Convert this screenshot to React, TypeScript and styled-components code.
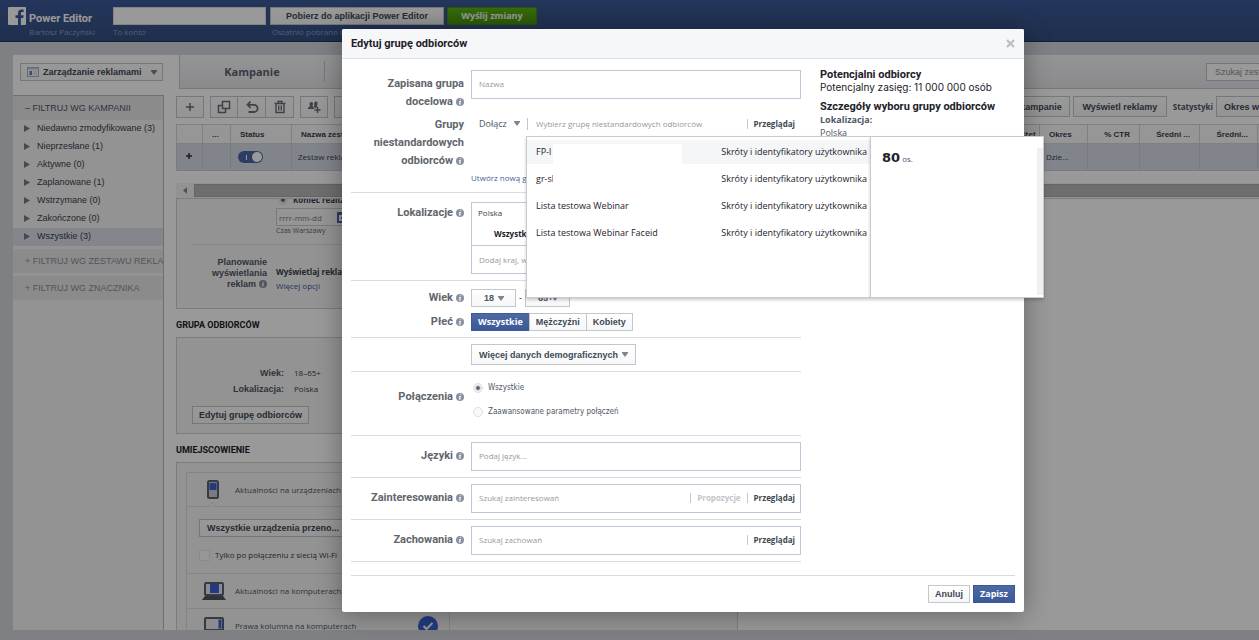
import React from "react";
import styled, { createGlobalStyle, css } from "styled-components";

const arial = `"Liberation Sans", Arial, sans-serif`;
const roboto = `Roboto, "Liberation Sans", sans-serif`;
const open = `"Open Sans", "Liberation Sans", sans-serif`;
const narrow = `"DejaVu Sans Condensed", "Open Sans", sans-serif`;

const Global = createGlobalStyle`
  *, *::before, *::after { box-sizing: border-box; }
  body { margin: 0; background: #d3d5dd; font: 9px/18px ${arial}; color: #373e4d; }
  button, input, select { font: inherit; color: inherit; margin: 0; }
  button { cursor: pointer; }
  input::placeholder { color: #999; opacity: 1; }
`;

/* ---------- shared parts ---------- */

const Button = styled.button<{ $h?: number; $align?: string; $w?: number }>`
  display: inline-flex;
  align-items: center;
  justify-content: ${(p) => p.$align || "center"};
  gap: 4px;
  flex: none;
  height: ${(p) => p.$h || 18}px;
  ${(p) => p.$w && `width: ${p.$w}px;`}
  padding: 0 7px;
  border: 1px solid #c4c6ca;
  background: linear-gradient(#fff, #f6f7f8);
  font: 700 9px/16px ${arial};
  color: #414956;
  white-space: nowrap;
`;

const PrimaryButton = styled(Button)`
  border-color: #3b5998;
  background: linear-gradient(#4e69a2, #3b5998);
  font-family: ${open};
  color: #fff;
`;

const GreenButton = styled(Button)`
  width: 90px;
  border-color: #478f10;
  background: linear-gradient(#5bb312, #4a9a0c);
  font-family: ${open};
  color: #fff;
`;

const CaretSvg = styled.svg`
  width: 6px;
  height: 5px;
  flex: none;
  fill: #7f8490;
`;
const Caret = () => (
  <CaretSvg viewBox="0 0 6 5" aria-hidden="true">
    <path d="M0 0h6v1L3 5 0 1z" />
  </CaretSvg>
);

const InfoSvg = styled.svg`
  width: 8px;
  height: 8px;
  flex: none;
  margin-left: 3px;
  vertical-align: -1px;
`;
const Info = () => (
  <InfoSvg viewBox="0 0 8 8" aria-hidden="true">
    <circle cx="4" cy="4" r="4" fill="#8a90a0" />
    <path d="M4.3 1.2h1l-.2 1h-1zM3.2 3h1.7l-.6 2.7h.6l-.2.9H2.9l.6-2.7h-.5z" fill="#fff" />
  </InfoSvg>
);

const Radio = styled.input.attrs({ type: "radio" })`
  appearance: none;
  flex: none;
  width: 10px;
  height: 10px;
  border: 1px solid #e0e1e4;
  border-radius: 50%;
  background: #f9f9fa;
  &:checked {
    background: radial-gradient(circle, #565d6b 0 1px, #f2f2f4 3px);
  }
`;

const Checkbox = styled.input.attrs({ type: "checkbox" })`
  appearance: none;
  width: 11px;
  height: 11px;
  border: 1px solid #e6e6e6;
  background: #fbfbfb;
`;

/* ---------- page frame ---------- */

const Viewport = styled.div`
  position: relative;
  height: 100vh;
  overflow: hidden;
`;
const Shell = styled.div`
  position: relative;
  display: flex;
  flex-direction: column;
  min-width: 1366px;
  height: 100%;
  padding-bottom: 10px;
`;
const Overlay = styled.div`
  position: absolute;
  inset: 0;
  padding-top: 29px;
  background: rgba(0, 0, 0, 0.4);
`;

const TopBar = styled.header`
  display: flex;
  flex: none;
  height: 42px;
  padding: 7px 8px 0;
  border-bottom: 1px solid #1c3468;
  background: linear-gradient(#3c5a9a, #34507f);
`;
const Brand = styled.div`
  width: 87px;
  padding: 5px 0 0 3px;
  h1 {
    margin: 0;
    font: 700 11px/14px ${roboto};
    color: #fff;
  }
`;
const Sub = styled.div`
  font: 8px/11px ${open};
  color: #8a9bc8;
  white-space: nowrap;
`;
const Account = styled.div`
  width: 157px;
  ${Sub} { padding-top: 1px; }
`;
const AccountInput = styled.input`
  display: block;
  width: 153px;
  height: 18px;
  border: 1px solid #ddd;
  background: #fff;
`;
const Download = styled.div`
  width: 177px;
  button { display: flex; }
  ${Sub} { padding: 1px 0 0 2px; }
`;

const Content = styled.div`
  display: flex;
  flex: 1;
  min-height: 0;
  margin: 13px 13px 0;
  background: #fff;
  overflow: hidden;
`;

/* ---------- sidebar ---------- */

const Sidebar = styled.nav`
  display: flex;
  flex-direction: column;
  flex: none;
  width: 151px;
`;
const Manage = styled(Button)`
  width: 143px;
  margin: 8px 0 14px 7px;
  padding: 0 5px 0 6px;
  span { flex: 1; text-align: left; }
`;
const Filters = styled.div`
  flex: 1;
  border-top: 1px solid #b9b9b9;
  border-right: 1px solid #b9b9b9;
  background: #f5f5f5;
`;
const FilterHead = styled.button<{ $open?: boolean }>`
  display: block;
  width: 100%;
  height: 24px;
  margin-bottom: ${(p) => (p.$open ? 0 : 3)}px;
  padding: 0 0 0 12px;
  border: 0;
  background: #e8e8ea;
  font: 9px/22px ${arial};
  text-align: left;
  white-space: nowrap;
  overflow: hidden;
  color: ${(p) => (p.$open ? "#4e5665" : "#898f9c")};
`;
const FilterList = styled.ul`
  margin: 0 0 3px;
  padding: 0;
  list-style: none;
`;
const FilterItem = styled.li<{ $on?: boolean }>`
  height: 18px;
  background: ${(p) => (p.$on ? "#dcdfea" : "transparent")};
  a {
    display: flex;
    align-items: center;
    gap: 7px;
    padding-left: 11px;
    font: 9px/17px ${arial};
    color: #373e4d;
    text-decoration: none;
    white-space: nowrap;
  }
  svg { width: 6px; height: 7px; fill: #777b84; }
`;

/* ---------- main column ---------- */

const Main = styled.main`
  display: flex;
  flex-direction: column;
  flex: 1;
  min-width: 0;
  padding-left: 12px;
`;
const Tabs = styled.div`
  display: flex;
  align-items: center;
  flex: none;
  height: 34px;
  margin-left: 3px;
  border-left: 1px solid #c6c8cd;
  border-bottom: 1px solid #c6c8cd;
  background: linear-gradient(#f6f7f8, #e6e7ea);
`;
const Tab = styled.button`
  width: 145px;
  height: 21px;
  border: 0;
  border-right: 1px solid #c6c8d2;
  background: none;
  font: 700 11px/20px ${open};
  color: #5b6270;
`;
const Search = styled.input`
  width: 147px;
  height: 18px;
  margin-left: auto;
  padding: 0 8px;
  border: 1px solid #bdc7d8;
  background: #fff;
  font: 9px ${arial};
  &::placeholder { color: #8a8f9a; }
`;
const Tools = styled.div`
  display: flex;
  align-items: center;
  flex: none;
  gap: 6px;
  height: 35px;
`;
const ToolGroup = styled.div`
  display: flex;
  button + button { margin-left: -1px; width: 29px; }
`;
const Tool = styled(Button)`
  width: 28px;
  height: 22px;
  padding: 0;
  svg { width: 14px; height: 14px; fill: none; stroke: #696e7a; }
`;
const ToolsRight = styled.div`
  display: flex;
  align-items: center;
  gap: 3px;
  margin-left: auto;
  strong { font: 700 8px/18px ${open}; color: #4e5665; padding-left: 3px; }
`;

const Table = styled.table`
  flex: none;
  width: 100%;
  table-layout: fixed;
  border-collapse: collapse;
  th, td {
    padding: 0 9px;
    border: 1px solid #d5d6da;
    overflow: hidden;
    white-space: nowrap;
    text-align: left;
  }
  th {
    height: 19px;
    font: 700 8px/17px ${arial};
    background: #fbfbfb;
  }
  td {
    height: 27px;
    padding: 0 6px;
    font: 8px/26px ${open};
    background: #d8dce8;
    border-color: #cacedb;
  }
`;
const Th = styled.th<{ $a?: string; $w?: number }>`
  && { text-align: ${(p) => p.$a || "left"}; }
  ${(p) => p.$w && `width: ${p.$w}px;`}
`;
const Switch = styled.label`
  display: flex;
  align-items: center;
  justify-content: space-between;
  width: 25px;
  height: 12px;
  padding: 0 1px 0 8px;
  border-radius: 6px;
  background: #4a66a5;
  margin-left: 1px;
  &::before { content: ""; width: 1px; height: 5px; background: #fff; }
  input {
    appearance: none;
    width: 10px;
    height: 10px;
    border-radius: 50%;
    background: #fff;
  }
`;
const ScrollRow = styled.div`
  display: flex;
  align-items: center;
  flex: none;
  height: 16px;
  margin-top: 12px;
  border-bottom: 1px solid #d0d0d4;
  background: #f4f4f4;
  svg { width: 4px; height: 7px; margin: 0 7px; fill: #888; }
`;
const Thumb = styled.div`
  flex: 1;
  height: 13px;
  background: #b7b7b7;
  border: 1px solid #a8a8a8;
`;

const Detail = styled.div`
  width: 562px;
`;
const Panel = styled.section<{ $h: number; $joined?: boolean }>`
  height: ${(p) => p.$h}px;
  border: 1px solid #cfcfcf;
  ${(p) => p.$joined && "border-top: 0;"}
  background: #f5f5f5;
  overflow: hidden;
`;
const PanelTitle = styled.h2`
  margin: 0;
  font: 700 9px/28px ${roboto};
  height: 28px;
  padding-top: 2px;
  color: #1d2129;
`;
const EndDate = styled.div`
  margin: -7px 0 7px 15px;
  padding-left: 84px;
  height: 53px;
  border-bottom: 1px solid #dedee0;
  label { display: flex; align-items: center; gap: 5px; padding-left: 2px; height: 16px; font: 700 8px/16px ${open}; }
`;
const DateBox = styled.span`
  display: flex;
  align-items: center;
  width: 90px;
  height: 18px;
  border: 1px solid #c9cbd1;
  background: #f9f9f9;
  input { width: 60px; height: 16px; padding: 0 2px; border: 0; background: none; font: 8px ${open}; }
  input::placeholder { color: #777; }
  svg { width: 12px; height: 11px; }
`;
const Note = styled.small`
  display: block;
  font: 7px/10px ${open};
  color: #666;
`;
const Schedule = styled.div`
  display: grid;
  grid-template-columns: 90px 1fr;
  column-gap: 9px;
  padding-top: 5px;
  > strong { padding-left: 20px; font: 700 9px/11px ${arial}; text-align: right; color: #4e5665; }
  div { padding-top: 8px; font: 700 8px/14px ${open}; }
  a { display: block; font-weight: 400; color: #3b5998; text-decoration: none; }
`;
const Facts = styled.dl`
  display: grid;
  grid-template-columns: 107px 1fr;
  column-gap: 10px;
  margin: 0;
  padding-top: 27px;
  dt { font: 700 9px/16px ${arial}; text-align: right; color: #4e5665; }
  dd { margin: 0; font: 8px/16px ${open}; }
`;
const EditAudience = styled(Button)`
  margin: 9px 0 0 15px;
  padding: 0 6px;
`;
const Placements = styled.ul`
  width: 264px;
  margin: 9px;
  padding: 0;
  border: 1px solid #dcdcde;
  border-radius: 2px;
  list-style: none;
`;
const Placement = styled.li<{ $h: number; $open?: boolean }>`
  position: relative;
  display: flex;
  align-items: center;
  height: ${(p) => p.$h}px;
  padding-right: 11px;
  border-bottom: 1px solid #dcdcde;
  font: 8px/16px ${open};
  color: #4e5665;
  > svg { flex: none; width: 24px; height: 20px; margin: 0 9px 0 15px; }
  > svg + svg { width: 20px; margin: 0 0 0 auto; }
  ${(p) =>
    p.$open &&
    css`
      &::after {
        content: "";
        position: absolute;
        left: 22px;
        bottom: -4px;
        width: 7px;
        height: 7px;
        border: solid #dcdcde;
        border-width: 1px 0 0 1px;
        background: #f5f5f5;
        transform: rotate(45deg);
        clip-path: polygon(0 0, 100% 0, 0 100%);
      }
    `}
`;
const PlacementOptions = styled.li`
  height: 67px;
  padding: 12px 12px 0;
  border-bottom: 1px solid #dcdcde;
  label { display: flex; align-items: center; gap: 5px; margin-top: 9px; font: 8px/18px ${open}; }
`;

/* ---------- dialog ---------- */

const Dialog = styled.section`
  position: relative;
  width: 682px;
  margin: 0 auto;
  background: #fff;
  border-radius: 2px;
  box-shadow: 0 2px 26px rgba(0, 0, 0, 0.35);
`;
const DialogHead = styled.header`
  display: flex;
  align-items: center;
  justify-content: space-between;
  height: 30px;
  padding: 0 9px;
  border-bottom: 1px solid #e2e3e6;
  border-radius: 2px 2px 0 0;
  background: #f6f7f9;
  h2 { margin: 0; padding-top: 1px; font: 700 11px/20px ${roboto}; color: #1d2129; }
  button { width: 9px; height: 20px; padding: 0; border: 0; background: none; }
  svg { display: block; width: 9px; height: 9px; stroke: #b8bbc2; stroke-width: 2; }
`;
const DialogBody = styled.div`
  display: flex;
  gap: 19px;
  padding: 0 9px;
`;
const Form = styled.form`
  flex: none;
  width: 450px;
`;
const Section = styled.div<{ $top: number; $bottom: number }>`
  display: flex;
  flex-direction: column;
  gap: 6px;
  padding: ${(p) => p.$top}px 0 ${(p) => p.$bottom}px;
  border-bottom: 1px solid #d9dadc;
`;
const Row = styled.div<{ $h?: number }>`
  display: grid;
  grid-template-columns: 113px 330px;
  column-gap: 7px;
  align-items: start;
  ${(p) => p.$h && `height: ${p.$h}px;`}
`;
const Label = styled.label<{ $pad?: number }>`
  padding-top: ${(p) => p.$pad || 0}px;
  text-align: right;
  font: 700 11px/18px ${roboto};
  color: #62656c;
`;
const fieldBox = css`
  border: 1px solid #bdc7d8;
  background: #fff;
`;
const Field = styled.div`
  ${fieldBox}
  display: flex;
  align-items: center;
  height: 29px;
  padding: 0 5px 2px 7px;
`;
const Bare = styled.input`
  flex: 1;
  min-width: 0;
  height: 18px;
  padding: 0;
  border: 0;
  outline: 0;
  background: none;
  font: 8px ${open};
`;
const FieldLink = styled.button<{ $off?: boolean }>`
  height: 10px;
  margin-left: 6px;
  padding: 0 0 0 6px;
  border: 0;
  border-left: 1px solid #bdc7d8;
  background: none;
  font: 700 8px/9px ${open};
  color: ${(p) => (p.$off ? "#c3c5ca" : "#3f4651")};
`;
const Audiences = styled.div`
  position: relative;
`;
const AudienceLine = styled.div`
  display: flex;
  align-items: center;
  height: 27px;
  padding: 0 6px 0 8px;
`;
const PlainSelect = styled.span`
  display: flex;
  align-items: center;
  width: 49px;
  height: 12px;
  margin-right: 8px;
  border-right: 1px solid #bdc7d8;
  select { appearance: none; width: 35px; height: 14px; padding: 0; border: 0; background: none; font: 9px/14px ${open}; color: #4e5665; }
`;
const CreateLink = styled.a`
  display: block;
  width: 55px;
  margin-top: 32px;
  overflow: hidden;
  white-space: nowrap;
  font: 8px/18px ${open};
  color: #4a6394;
  text-decoration: none;
`;
const Popup = styled.div`
  position: absolute;
  z-index: 2;
  left: 55px;
  top: 26px;
  display: flex;
  width: 518px;
  height: 162px;
`;
const Options = styled.div`
  position: relative;
  flex: none;
  width: 344px;
  padding: 3px 0;
  border: 1px solid #c9cacd;
  border-right: 0;
  background: #fff;
  box-shadow: 0 2px 3px rgba(0, 0, 0, 0.2);
`;
const Option = styled.button<{ $on?: boolean }>`
  display: flex;
  align-items: center;
  justify-content: space-between;
  width: 100%;
  height: 24px;
  margin-bottom: 3px;
  padding: 0 3px 0 9px;
  border: 0;
  background: ${(p) => (p.$on ? "#f5f6f8" : "#fff")};
  font: 9px/24px ${open};
  color: #1d2129;
`;
const Blank = styled.div`
  position: absolute;
  left: 26px;
  top: 7px;
  width: 129px;
  height: 44px;
  background: #fff;
`;
const HoverCard = styled.div`
  position: relative;
  flex: 1;
  padding: 12px 11px;
  border: 1px solid #c9cacd;
  background: #fff;
  box-shadow: 0 2px 3px rgba(0, 0, 0, 0.2);
  font: 8px/18px ${open};
  color: #4e5665;
  strong { font: 700 13px/18px "DejaVu Sans", sans-serif; color: #1d2129; }
  &::after {
    content: "";
    position: absolute;
    right: 0;
    top: 11px;
    bottom: 2px;
    width: 6px;
    background: #f0f0f0;
  }
`;
const Places = styled.div`
  ${fieldBox}
  height: 72px;
  font: 8px/20px ${open};
  p { margin: 0; padding-left: 6px; }
  strong { display: block; padding-left: 22px; line-height: 22px; color: #1d2129; }
  div { display: flex; align-items: center; height: 28px; padding: 0 7px; border-top: 1px solid #bdc7d8; }
`;
const Ages = styled.div`
  display: flex;
  gap: 3px;
  line-height: 18px;
`;
const AgeSelect = styled.span`
  position: relative;
  select {
    appearance: none;
    display: block;
    width: 45px;
    height: 18px;
    padding: 0 0 0 12px;
    border: 1px solid #c4c6ca;
    border-radius: 0;
    background: linear-gradient(#fff, #f6f7f8);
    font: 700 9px ${arial};
    color: #4e5665;
  }
  svg { position: absolute; right: 12px; top: 7px; }
`;
const Segments = styled.div`
  display: flex;
  button + button { margin-left: -1px; }
  button { padding: 0 6px; }
`;
const Choices = styled.div`
  display: flex;
  flex-direction: column;
  gap: 6px;
  label { display: flex; align-items: center; gap: 5px; padding-left: 2px; font: 8px/18px ${narrow}; color: #4e5665; }
`;
const Aside = styled.aside`
  padding-top: 9px;
  font: 10px/13px Inter, ${roboto};
  color: #1d2129;
  h3 { margin: 0; font: 700 11px/13px ${roboto}; }
  p { margin: 0 0 6px; }
  dl { margin: 0; font: 9px/13px ${open}; color: #4e5665; }
  dt { font-weight: 700; }
  dd { margin: 0; }
`;
const DialogFoot = styled.footer`
  display: flex;
  justify-content: flex-end;
  gap: 3px;
  margin: 13px 9px 0;
  padding: 9px 0;
  border-top: 1px solid #d9dadc;
  button { padding: 0 6px; }
`;

/* ---------- data ---------- */

const filters = [
  "Niedawno zmodyfikowane (3)",
  "Nieprzesłane (1)",
  "Aktywne (0)",
  "Zaplanowane (1)",
  "Wstrzymane (0)",
  "Zakończone (0)",
  "Wszystkie (3)",
];
const audiences = ["FP-l", "gr-sl", "Lista testowa Webinar", "Lista testowa Webinar Faceid"];

const Laptop = ({ side }: { side?: boolean }) => (
  <svg viewBox="0 0 24 20" aria-hidden="true">
    <rect x="3" y="2" width="18" height="12" rx="1" fill="#e8e9ee" stroke="#5d6270" strokeWidth="2" />
    {side ? <rect x="16.500" y="3.500" width="3" height="9" fill="#3b62d6" /> : <rect x="8" y="3" width="9" height="9" fill="#3b62d6" />}
    <path d="M3 15h18l3 4H0z" fill="#4d525e" />
  </svg>
);

export default function App() {
  return (
    <Viewport>
      <Global />
      <Shell>
        <TopBar>
          <svg width="18" height="18" viewBox="0 0 18 18" aria-hidden="true">
            <rect width="18" height="18" rx="1" fill="#fff" />
            <path d="M10 18v-7H7.500V8.300H10V6.300C10 3.800 11.400 2.600 13.600 2.600h2v2.500h-1.300c-1.100 0-1.400.5-1.400 1.400v1.800h2.700l-.4 2.700h-2.300v7z" fill="#3b5998" />
          </svg>
          <Brand>
            <h1>Power Editor</h1>
            <Sub>Bartosz Paczyński</Sub>
          </Brand>
          <Account>
            <AccountInput aria-label="Konto" />
            <Sub>To konto</Sub>
          </Account>
          <Download>
            <Button $w={174}>Pobierz do aplikacji Power Editor</Button>
            <Sub>Ostatnio pobrano dzisiaj</Sub>
          </Download>
          <GreenButton>Wyślij zmiany</GreenButton>
        </TopBar>

        <Content>
          <Sidebar>
            <Manage>
              <svg width="12" height="10" viewBox="0 0 12 10" aria-hidden="true">
                <rect x=".5" y=".5" width="11" height="9" fill="#f2f4f8" stroke="#a9b3c9" />
                <path d="M1 1h10v1.500H1z" fill="#c3cbdc" />
                <path d="M2.500 4H5v4H2.500z" fill="#6a7fae" />
                <path d="M7 5h3M7 7h3" stroke="#ccd3e2" />
              </svg>
              <span>Zarządzanie reklamami</span>
              <Caret />
            </Manage>
            <Filters>
              <FilterHead $open>– FILTRUJ WG KAMPANII</FilterHead>
              <FilterList>
                {filters.map((f, i) => (
                  <FilterItem key={f} $on={i === 6}>
                    <a href="#filtr">
                      <svg viewBox="0 0 6 7" aria-hidden="true"><path d="M0 0l6 3.500L0 7z" /></svg>
                      {f}
                    </a>
                  </FilterItem>
                ))}
              </FilterList>
              <FilterHead>+ FILTRUJ WG ZESTAWU REKLAM</FilterHead>
              <FilterHead>+ FILTRUJ WG ZNACZNIKA</FilterHead>
            </Filters>
          </Sidebar>

          <Main>
            <Tabs>
              <Tab>Kampanie</Tab>
              <Search aria-label="Szukaj" placeholder="Szukaj zestawów reklam" />
            </Tabs>
            <Tools>
              <Tool aria-label="Dodaj">
                <svg viewBox="0 0 14 14"><path d="M7 3v8M3 7h8" strokeWidth="1.500" /></svg>
              </Tool>
              <ToolGroup>
                <Tool aria-label="Duplikuj">
                  <svg viewBox="0 0 14 14" strokeWidth="1.500"><path d="M5.500 1.500h7v7h-7zM5 5.500H1.500v7h7V9" /></svg>
                </Tool>
                <Tool aria-label="Cofnij">
                  <svg viewBox="0 0 14 14" strokeWidth="1.800"><path d="M5.500 1.500L2.500 4.800l3 3.200M3 4.800h6a3.300 3.300 0 010 7.200H3.500" /></svg>
                </Tool>
                <Tool aria-label="Usuń">
                  <svg viewBox="0 0 14 14" strokeWidth="1.400"><path d="M1.500 3.500h11M5 3V1.500h4V3M3 4v8.500h8V4M5.700 5.500v5M8.300 5.500v5" /></svg>
                </Tool>
              </ToolGroup>
              <Tool aria-label="Utwórz grupę">
                <svg viewBox="0 0 14 14">
                  <path d="M4.500 2c1.700 0 1.900 2.200 1 3.800.2 1.400 1.900 1.200 2 3.200H.8c0-2 1.900-2 2.200-3.200C2 4.200 2.600 2 4.500 2zM9 1.500c1.700 0 2 2.200 1.100 3.800l.4 1.200-2.300 1.800-1.400-2 .5-1C6.800 3.700 7.200 1.500 9 1.500z" fill="#696e7a" stroke="none" />
                  <path d="M10.500 7v6M7.500 10h6" strokeWidth="1.500" />
                </svg>
              </Tool>
              <Tool aria-label="Eksportuj" />
              <ToolsRight>
                <Button $h={21}>Wyświetl kampanie</Button>
                <Button $h={21} $w={94}>Wyświetl reklamy</Button>
                <strong>Statystyki</strong>
                <Button $h={21} $w={137} $align="flex-start">Okres wyświetlania</Button>
              </ToolsRight>
            </Tools>
            <Table>
              <thead>
                <tr>
                  <Th $w={26} />
                  <Th $w={28}>...</Th>
                  <Th $w={61}>Status</Th>
                  <Th>Nazwa zestawu reklam</Th>
                  <Th $w={40} $a="right">Budżet</Th>
                  <Th $w={48}>Okres</Th>
                  <Th $w={52} $a="right">% CTR</Th>
                  <Th $w={60} $a="right">Średni ...</Th>
                  <Th $w={58} $a="right">Średni...</Th>
                  <Th $w={95} />
                </tr>
              </thead>
              <tbody>
                <tr>
                  <td>
                    <svg width="12" height="8" viewBox="0 0 12 8" aria-label="Rozwiń"><path d="M6 1v6M3 4h6" stroke="#333" strokeWidth="1.500" /></svg>
                  </td>
                  <td />
                  <td><Switch><input type="checkbox" defaultChecked aria-label="Status" /></Switch></td>
                  <td>Zestaw reklam</td>
                  <td />
                  <td>Dzie...</td>
                  <td /><td /><td /><td />
                </tr>
              </tbody>
            </Table>
            <ScrollRow>
              <svg viewBox="0 0 4 7" aria-hidden="true"><path d="M4 0v7L0 3.500z" /></svg>
              <Thumb />
            </ScrollRow>

            <Detail>
              <Panel $h={110} $joined>
                <EndDate>
                  <label><Radio name="end" defaultChecked /> Koniec realizacji</label>
                  <DateBox>
                    <input aria-label="Data" placeholder="rrrr-mm-dd" />
                    <svg viewBox="0 0 12 11" aria-hidden="true">
                      <rect width="12" height="11" fill="#4a66a5" />
                      <rect x="2" y="3" width="8" height="6" fill="#fff" />
                      <rect x="4" y="5" width="2" height="2" fill="#4a66a5" />
                    </svg>
                  </DateBox>
                  <Note>Czas Warszawy</Note>
                </EndDate>
                <Schedule>
                  <strong>Planowanie wyświetlania reklam<Info /></strong>
                  <div>Wyświetlaj reklamy cały czas<a href="#opcje">Więcej opcji</a></div>
                </Schedule>
              </Panel>
              <PanelTitle>GRUPA ODBIORCÓW</PanelTitle>
              <Panel $h={97}>
                <Facts>
                  <dt>Wiek:</dt><dd>18–65+</dd>
                  <dt>Lokalizacja:</dt><dd>Polska</dd>
                </Facts>
                <EditAudience>Edytuj grupę odbiorców</EditAudience>
              </Panel>
              <PanelTitle>UMIEJSCOWIENIE</PanelTitle>
              <Panel $h={220}>
                <Placements>
                  <Placement $h={34} $open>
                    <svg viewBox="0 0 24 20" aria-hidden="true">
                      <rect x="6" y="1" width="10" height="17" rx="1.500" fill="#c9ccd3" stroke="#5d6270" strokeWidth="2" />
                      <rect x="7.500" y="3" width="7" height="7" fill="#3b62d6" />
                    </svg>
                    Aktualności na urządzeniach
                  </Placement>
                  <PlacementOptions>
                    <Button $w={190} $align="flex-start">Wszystkie urządzenia przeno...</Button>
                    <label><Checkbox /> Tylko po połączeniu z siecią Wi-Fi</label>
                  </PlacementOptions>
                  <Placement $h={35}><Laptop />Aktualności na komputerach</Placement>
                  <Placement $h={35}>
                    <Laptop side />
                    Prawa kolumna na komputerach
                    <svg viewBox="0 0 20 20" aria-hidden="true">
                      <circle cx="10" cy="10" r="10" fill="#3b62d6" />
                      <path d="M5.500 10l3 3 6-6" fill="none" stroke="#fff" strokeWidth="2" />
                    </svg>
                  </Placement>
                </Placements>
              </Panel>
            </Detail>
          </Main>
        </Content>

        <Overlay>
          <Dialog role="dialog" aria-label="Edytuj grupę odbiorców">
            <DialogHead>
              <h2>Edytuj grupę odbiorców</h2>
              <button aria-label="Zamknij">
                <svg viewBox="0 0 9 9"><path d="M1 1l7 7M8 1L1 8" /></svg>
              </button>
            </DialogHead>
            <DialogBody>
              <Form onSubmit={(e) => e.preventDefault()}>
                <Section $top={11} $bottom={0}>
                  <Row $h={34}>
                    <Label htmlFor="name" $pad={5}>Zapisana grupa docelowa<Info /></Label>
                    <Field><Bare id="name" placeholder="Nazwa" /></Field>
                  </Row>
                  <Row $h={82}>
                    <Label htmlFor="aud" $pad={6}>Grupy niestandardowych odbiorców<Info /></Label>
                    <Audiences>
                      <AudienceLine>
                        <PlainSelect>
                          <select aria-label="Tryb"><option>Dołącz</option></select>
                          <Caret />
                        </PlainSelect>
                        <Bare id="aud" placeholder="Wybierz grupę niestandardowych odbiorców" />
                        <FieldLink>Przeglądaj</FieldLink>
                      </AudienceLine>
                      <CreateLink href="#nowa">Utwórz nową grupę</CreateLink>
                      <Popup>
                        <Options>
                          {audiences.map((a, i) => (
                            <Option key={a} $on={i === 0}>
                              <span>{a}</span>
                              <span>Skróty i identyfikatory użytkownika</span>
                            </Option>
                          ))}
                          <Blank />
                        </Options>
                        <HoverCard><strong>80</strong> os.</HoverCard>
                      </Popup>
                    </Audiences>
                  </Row>
                </Section>
                <Section $top={9} $bottom={6}>
                  <Row>
                    <Label htmlFor="loc" $pad={2}>Lokalizacje<Info /></Label>
                    <Places>
                      <p>Polska</p>
                      <strong>Wszystkie</strong>
                      <div><Bare id="loc" placeholder="Dodaj kraj, województwo" /></div>
                    </Places>
                  </Row>
                </Section>
                <Section $top={8} $bottom={6}>
                  <Row>
                    <Label htmlFor="age">Wiek<Info /></Label>
                    <Ages>
                      <AgeSelect><select id="age"><option>18</option></select><Caret /></AgeSelect>
                      -
                      <AgeSelect><select aria-label="Wiek do"><option>65+</option></select><Caret /></AgeSelect>
                    </Ages>
                  </Row>
                  <Row>
                    <Label as="span">Płeć<Info /></Label>
                    <Segments>
                      <PrimaryButton>Wszystkie</PrimaryButton>
                      <Button>Mężczyźni</Button>
                      <Button>Kobiety</Button>
                    </Segments>
                  </Row>
                </Section>
                <Section $top={6} $bottom={6}>
                  <Row>
                    <span />
                    <Segments>
                      <Button $h={21} $w={165}>Więcej danych demograficznych<Caret /></Button>
                    </Segments>
                  </Row>
                </Section>
                <Section $top={7} $bottom={14}>
                  <Row>
                    <Label as="span" $pad={9}>Połączenia<Info /></Label>
                    <Choices>
                      <label><Radio name="conn" defaultChecked />Wszystkie</label>
                      <label><Radio name="conn" />Zaawansowane parametry połączeń</label>
                    </Choices>
                  </Row>
                </Section>
                <Section $top={6} $bottom={6}>
                  <Row>
                    <Label htmlFor="lang" $pad={5}>Języki<Info /></Label>
                    <Field><Bare id="lang" placeholder="Podaj język..." /></Field>
                  </Row>
                </Section>
                <Section $top={6} $bottom={6}>
                  <Row>
                    <Label htmlFor="int" $pad={5}>Zainteresowania<Info /></Label>
                    <Field>
                      <Bare id="int" placeholder="Szukaj zainteresowań" />
                      <FieldLink $off>Propozycje</FieldLink>
                      <FieldLink>Przeglądaj</FieldLink>
                    </Field>
                  </Row>
                </Section>
                <Section $top={6} $bottom={6}>
                  <Row>
                    <Label htmlFor="beh" $pad={5}>Zachowania<Info /></Label>
                    <Field>
                      <Bare id="beh" placeholder="Szukaj zachowań" />
                      <FieldLink>Przeglądaj</FieldLink>
                    </Field>
                  </Row>
                </Section>
              </Form>
              <Aside>
                <h3>Potencjalni odbiorcy</h3>
                <p>Potencjalny zasięg: 11 000 000 osób</p>
                <h3>Szczegóły wyboru grupy odbiorców</h3>
                <dl><dt>Lokalizacja:</dt><dd>Polska</dd></dl>
              </Aside>
            </DialogBody>
            <DialogFoot>
              <Button>Anuluj</Button>
              <PrimaryButton>Zapisz</PrimaryButton>
            </DialogFoot>
          </Dialog>
        </Overlay>
      </Shell>
    </Viewport>
  );
}
